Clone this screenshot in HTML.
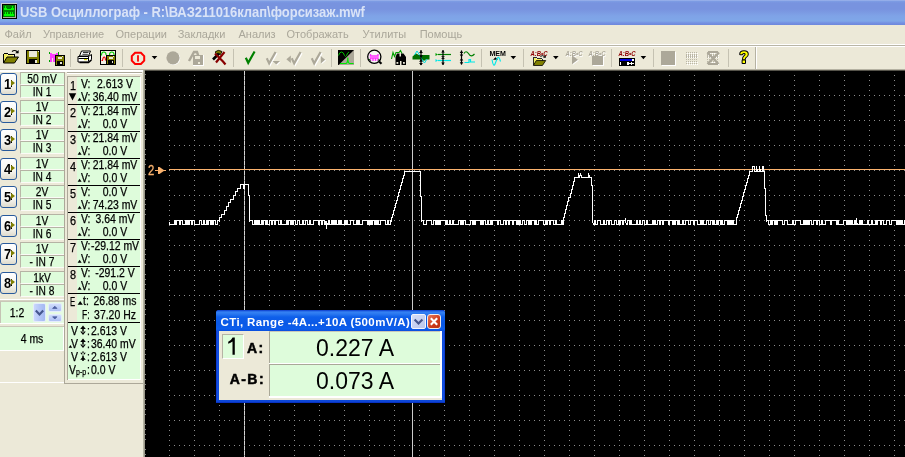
<!DOCTYPE html>
<html><head><meta charset="utf-8"><title>USB Oscilloscope</title>
<style>
html,body{margin:0;padding:0;}
html{background:#ECE9D8;}
body{will-change:transform;}
body{width:905px;height:457px;overflow:hidden;background:#ECE9D8;font-family:"Liberation Sans",sans-serif;position:relative;}
div,span{position:absolute;box-sizing:border-box;white-space:nowrap;}
svg{position:absolute;left:0;top:0;overflow:visible;}
.title{left:0;top:0;width:905px;height:25px;background:linear-gradient(#9fb6ec 0px,#7c9be3 1.5px,#7893df 3px,#7893df 9px,#7b99e2 12px,#7fa3e7 16px,#7fa7e8 21px,#7490e2 23px,#6d87dc 25px);}
.ttext{left:20px;top:4.2px;font-size:13px;font-weight:bold;color:#d9e3f7;letter-spacing:-0.04px;transform:scaleY(1.08);transform-origin:0 0;}
.menu{top:25px;left:0;width:905px;height:20px;background:#ECE9D8;}
.menu span{top:3px;font-size:11px;color:#aaa79a;}
.tb{top:45px;left:0;width:905px;height:26px;background:#ECE9D8;}
.lbl{left:20px;width:44px;height:13px;background:#defcdb;border-top:1px solid #b5b3a4;border-left:1px solid #b9b7a8;border-bottom:1px solid #fbfbf6;color:#000;}
.lbl span{left:-79.5px;width:200px;text-align:center;top:0.6px;font-size:12px;line-height:11px;transform:scaleX(0.85);transform-origin:50% 0;-webkit-text-stroke:0.25px #000;}
.btn{left:0;width:17px;height:22px;border:1px solid #285a9c;border-radius:3px;background:linear-gradient(#ffffff,#f6f5f0 60%,#dedbcd);}
.btn span{left:2.7px;top:1.6px;font-weight:bold;font-size:14px;line-height:16px;color:#000;transform:scaleX(0.92);transform-origin:0 0}
.btn i{position:absolute;left:10.3px;top:5.6px;width:0;height:0;border-left:4px solid #808000;border-top:3.5px solid transparent;border-bottom:3.5px solid transparent;}
.btn b{position:absolute;left:9.8px;top:5.6px;width:1px;height:7px;background:#000}
.m{font-size:12px;color:#000;line-height:13px;}
</style></head><body>

<div class="title"></div>
<svg width="905" height="30" viewBox="0 0 905 30" shape-rendering="crispEdges">
<rect x="1" y="3" width="16" height="16" fill="#c8ccd0"/><rect x="2" y="4" width="15" height="15" fill="#000"/><rect x="3" y="5" width="13" height="13" fill="#b0b0a0"/><rect x="3" y="5" width="12" height="12" fill="#008000"/>
<path d="M3.5 10 v-2 h1 v-2 h1.5 v2 h1 v1 h3.5 v-1 h1 v-2 h1.5 v2 h1 v2 z" fill="#00ff00"/>
<path d="M3.5 16 v-2 h1 v-2 h1 v2 h1.5 v-2 h1 v2 h1.5 v-2 h1 v2 h1.5 v-2 h1 v2 h1 v2 z" fill="#00ff00"/>
</svg>
<span class="ttext">USB Осциллограф - R:\ВАЗ211016клап\форсизаж.mwf</span>
<div class="menu">
<span style="left:4.5px">Файл</span>
<span style="left:43px">Управление</span>
<span style="left:115.5px">Операции</span>
<span style="left:177.7px">Закладки</span>
<span style="left:238.5px">Анализ</span>
<span style="left:286.5px">Отображать</span>
<span style="left:362.6px">Утилиты</span>
<span style="left:419.7px">Помощь</span>
</div>
<div class="tb"></div>
<div style="left:0;top:44px;width:905px;height:1px;background:#ffffff"></div>
<div style="left:0;top:45px;width:905px;height:1px;background:#b9b6a6"></div>
<div style="left:0;top:46px;width:905px;height:1px;background:#ffffff"></div>
<div style="left:0;top:69px;width:905px;height:1px;background:#b5b2a2"></div>
<div style="left:145px;top:70px;width:760px;height:1px;background:#55534a"></div>
<div style="left:755px;top:47px;width:1px;height:22px;background:#b5b2a2"></div>
<div style="left:756px;top:47px;width:1px;height:22px;background:#ffffff"></div>
<div style="left:70px;top:49px;width:1px;height:18px;background:#c5c2b2"></div>
<div style="left:122px;top:49px;width:1px;height:18px;background:#c5c2b2"></div>
<div style="left:233px;top:49px;width:1px;height:18px;background:#c5c2b2"></div>
<div style="left:331px;top:49px;width:1px;height:18px;background:#c5c2b2"></div>
<div style="left:360px;top:49px;width:1px;height:18px;background:#c5c2b2"></div>
<div style="left:481px;top:49px;width:1px;height:18px;background:#c5c2b2"></div>
<div style="left:523px;top:49px;width:1px;height:18px;background:#c5c2b2"></div>
<div style="left:611px;top:49px;width:1px;height:18px;background:#c5c2b2"></div>
<div style="left:653px;top:49px;width:1px;height:18px;background:#c5c2b2"></div>
<div style="left:728px;top:49px;width:1px;height:18px;background:#c5c2b2"></div>
<svg width="905" height="80" viewBox="0 0 905 80">
<g transform="translate(3,49)" shape-rendering="crispEdges"><path d="M0.5 4.5 h4 l1 1 h5.5 v3 M0.5 4.5 v9.5" fill="none" stroke="#000"/><rect x="1" y="5" width="3" height="8" fill="#f4f060"/><rect x="4" y="6" width="6" height="2" fill="#f4f060"/><path d="M0.5 14 l3.5 -6 h11.5 l-4 6 z" fill="#808000" stroke="#000" stroke-linejoin="miter" shape-rendering="auto"/><path d="M9 2.5 q2.5 -2 5 0 l0.8 1.5" fill="none" stroke="#000" stroke-width="1.1" shape-rendering="auto"/><path d="M12.2 4.2 h3.4 v-3.2 z" fill="#000" shape-rendering="auto"/></g>
<g transform="translate(26,50)" shape-rendering="crispEdges"><rect x="0" y="0" width="14" height="14" fill="#000"/><rect x="1" y="1" width="12" height="12" fill="#808000"/><rect x="2.9" y="1" width="8.0" height="6.3" fill="#ece9d8"/><rect x="2.9" y="9.0" width="8.4" height="4.0" fill="#000"/><rect x="8.7" y="10.1" width="1.8" height="2.8" fill="#ece9d8"/><rect x="11.8" y="1.2" width="1" height="1" fill="#ece9d8"/></g>
<g transform="translate(49,52)" shape-rendering="crispEdges"><path d="M1 0.5 h8 v9 h-8 z" fill="#ff40ff"/><rect x="3.2" y="0" width="3.6" height="2.4" fill="#ece9d8"/><rect x="2.6" y="6" width="1.6" height="3.5" fill="#ece9d8"/><rect x="0" y="0" width="1" height="2" fill="#00a000"/><rect x="9" y="0" width="1" height="3" fill="#00a000"/><rect x="0" y="7.5" width="1" height="2" fill="#00a000"/></g>
<g transform="translate(54.5,55)" shape-rendering="crispEdges"><rect x="0" y="0" width="10" height="10.5" fill="#000"/><rect x="1" y="1" width="8" height="8.5" fill="#808000"/><rect x="3.0" y="2.1" width="4.0" height="1.8" fill="#ece9d8"/><rect x="2.5" y="5.8" width="5.5" height="3.7" fill="#000"/><rect x="5.8" y="6.8" width="1.2" height="2.1" fill="#ece9d8"/><rect x="7.8" y="1.2" width="1" height="1" fill="#ece9d8"/></g>
<g transform="translate(77,49)"><path d="M4.5 2 h9 l-2 5 h-9 z" fill="#fff" stroke="#000" stroke-width="1"/><path d="M6 3.5 h5.5 M5.4 5.3 h5.5" stroke="#000" stroke-width="0.8"/><path d="M1 7.5 h10.5 l3 -2 v5 l-3 2.5 h-10.5 z" fill="#fff" stroke="#000" stroke-width="1"/><path d="M1.5 9.5 h10 M11.5 7.5 v5" stroke="#000" stroke-width="1"/><rect x="7" y="10" width="3" height="1.2" fill="#e0e000"/><path d="M2.5 13.5 h9 l3 -2.5" fill="none" stroke="#000" stroke-width="1.4"/></g>
<g transform="translate(100,50)" shape-rendering="crispEdges"><rect x="0" y="0" width="16" height="15" fill="#000"/><rect x="1" y="1" width="14" height="13" fill="#f4f2e6"/><path d="M1.5 5.5 q0 -3.5 2.3 -3.5 q2.3 0 2.3 3 M9.5 5 q0 -3 2.3 -3 q2.3 0 2.3 3" fill="none" stroke="#00d000" stroke-width="1.1" shape-rendering="auto"/><path d="M1.5 10.5 h1 q0.5 -3.5 1.8 -3.5 q1 0 1.2 3.5" fill="none" stroke="#f00000" stroke-width="1.1" shape-rendering="auto"/></g>
<g transform="translate(106,55)" shape-rendering="crispEdges"><rect x="0" y="0" width="9.5" height="9.5" fill="#000"/><rect x="1" y="1" width="7.5" height="7.5" fill="#808000"/><rect x="2.9" y="1.9" width="3.8" height="1.6" fill="#ece9d8"/><rect x="2.4" y="5.2" width="5.2" height="3.3" fill="#000"/><rect x="5.5" y="6.2" width="1.1" height="1.9" fill="#ece9d8"/><rect x="7.3" y="1.2" width="1" height="1" fill="#ece9d8"/></g>
<g transform="translate(130.8,51.8)"><path d="M4.3 1 h5.8 l3.3 3.3 v4.5 l-3.3 3.3 h-5.8 l-3.3 -3.3 v-4.5 z" fill="none" stroke="#ff0000" stroke-width="2"/><rect x="6.3" y="3.4" width="1.8" height="6.4" fill="#ff0000"/></g>
<g transform="translate(151.7,56)"><path d="M0 0 h5.6 l-2.8 3.2 z" fill="#000"/></g>
<g transform="translate(166,51)"><circle cx="7.6" cy="7.4" r="6.6" fill="#fff"/><circle cx="7" cy="6.8" r="6.6" fill="#aca899"/></g>
<g transform="translate(188,50)" shape-rendering="crispEdges"><path d="M1 11 l5 -9 h3 l1 3 v2" fill="none" stroke="#aca899" stroke-width="2.4" shape-rendering="auto"/><rect x="5" y="5" width="11" height="11" fill="#fff"/><rect x="4.5" y="4.5" width="10.5" height="10.5" fill="#aca899"/><rect x="7" y="5.5" width="5" height="3.5" fill="#ece9d8"/><rect x="10" y="11.5" width="1.6" height="2.5" fill="#ece9d8"/></g>
<g transform="translate(211,49)"><path d="M2 10.5 l6.5 -6.5" stroke="#000" stroke-width="2.6"/><path d="M4 3 q3 -3 7 -0.5 l-1.5 3 q-2 -2 -4 -1 z" fill="#808000" stroke="#000" stroke-width="0.8"/><path d="M4 4.5 l8 8 l2.5 3 M13.5 3 l-8.5 10.5" stroke="#880000" stroke-width="2.2" fill="none"/></g>
<g transform="translate(243,49.5)"><path d="M2.8 8.3 l2.4 5 l6.4 -11.3" fill="none" stroke="#008000" stroke-width="2.2"/></g>
<g transform="translate(264,50)"><path d="M2.8 8.3 l2.4 5 l6.4 -11.3" fill="none" stroke="#fff" stroke-width="2.2" transform="translate(1,1)"/><path d="M2.8 8.3 l2.4 5 l6.4 -11.3" fill="none" stroke="#aca899" stroke-width="2.2"/><path d="M8.5 11 h7.5 l-3.75 3.6 z" fill="#fff" transform="translate(0.8,0.8)"/><path d="M8.5 11 h7.5 l-3.75 3.6 z" fill="#aca899"/></g>
<g transform="translate(289,50)"><path d="M2.8 8.3 l2.4 5 l6.4 -11.3" fill="none" stroke="#fff" stroke-width="2.2" transform="translate(1,1)"/><path d="M2.8 8.3 l2.4 5 l6.4 -11.3" fill="none" stroke="#aca899" stroke-width="2.2"/><path d="M1.8 5.5 v7.5 l-4.4 -3.75 z" fill="#aca899"/></g>
<g transform="translate(309,50)"><path d="M2.8 8.3 l2.4 5 l6.4 -11.3" fill="none" stroke="#fff" stroke-width="2.2" transform="translate(1,1)"/><path d="M2.8 8.3 l2.4 5 l6.4 -11.3" fill="none" stroke="#aca899" stroke-width="2.2"/><path d="M11.8 6 v7.5 l4.4 -3.75 z" fill="#fff" transform="translate(0.8,0.8)"/><path d="M11.8 6 v7.5 l4.4 -3.75 z" fill="#aca899"/></g>
<g transform="translate(338,50)" shape-rendering="crispEdges"><rect x="0" y="0" width="16" height="15" fill="#000"/><path d="M16 0 v15 h-15.5 z" fill="#aca899" shape-rendering="auto"/><path d="M0.5 5.5 q1 -3.5 3 -3.5 q2 0 3 3.5 q1 2 2 0 q1 -3 2.5 -3.5" fill="none" stroke="#00c000" stroke-width="1" shape-rendering="auto"/><path d="M2 13.5 h6 q1.8 -0.5 1.8 -6 q0 5.5 1.8 6 h4" fill="none" stroke="#00e800" stroke-width="1.2" shape-rendering="auto"/></g>
<g transform="translate(367,49.5)"><circle cx="7.3" cy="7.3" r="6.6" fill="#f8f8f4" stroke="#000" stroke-width="1.3"/><path d="M12.3 12.3 l2.2 2" stroke="#000" stroke-width="2.2"/><path d="M3.5 4.5 v2 h7.5 v-2 M3.5 11.5 v-3 h7.5 v3 M6 9 v2.5 M8.5 9 v2.5" fill="none" stroke="#ff30ff" stroke-width="1.4"/><path d="M2.2 9.5 l1.2 1.8 M12.2 9.5 l-1 1.8" stroke="#008000" stroke-width="1"/></g>
<g transform="translate(390.5,50)"><path d="M1 9 l1.5 -6.5 l1.5 4 l1.5 -4 h3 l1.5 -2 l1.5 3" fill="none" stroke="#00a000" stroke-width="1.1"/><path d="M5 7 l1.5 -3.5 h2.5 v3 h1.5 v-3 h2.5 l2.5 3.5 v8 h-4.5 v-4 h-1.5 v4 h-4.5 z" fill="#000"/><rect x="6" y="12" width="1.8" height="1.8" fill="#ece9d8"/><rect x="12.5" y="12" width="1.8" height="1.8" fill="#ece9d8"/></g>
<g transform="translate(412.5,50)"><path d="M0 9.5 v-3 l3.5 -3 l3 1.5 h10.5 v4.5 h-4 v1 h-3 l-1 -1 z" fill="#007000"/><path d="M2 5 l2.5 -4 l2.5 4 l3.5 6 l1.5 2 l2.5 -4" fill="none" stroke="#00e0e0" stroke-width="1"/><path d="M8.5 0 v15" stroke="#000" stroke-width="1.2"/><path d="M6.6 3 h3.8 l-1.9 -2.6 z M6.6 5.2 h3.8 l-1.9 2.6 z M6.6 11.8 h3.8 l-1.9 -2.6 z M6.6 13 h3.8 l-1.9 2.6 z" fill="#000"/></g>
<g transform="translate(435,50)"><path d="M3 4.5 h13" stroke="#008000" stroke-width="1.2"/><path d="M3 10.5 h13" stroke="#00e8e8" stroke-width="1.2"/><path d="M0.5 3 l2.5 1.5 l-2.5 1.5 z" fill="#00a000"/><path d="M0.5 9 l2.5 1.5 l-2.5 1.5 z" fill="#00e8e8"/><path d="M8 0 v15" stroke="#000" stroke-width="1.2"/><path d="M6.2 2.6 h3.6 l-1.8 -2.4 z M6.2 6.2 h3.6 l-1.8 2.2 z M6.2 9 h3.6 l-1.8 -2.2 z M6.2 12.6 h3.6 l-1.8 2.4 z" fill="#000"/></g>
<g transform="translate(459.5,50)"><path d="M2 0.5 v14" stroke="#000" stroke-width="1.2"/><path d="M0.2 3 h3.6 l-1.8 -2.6 z M0.2 4.6 h3.6 l-1.8 2.4 z M0.2 10.6 h3.6 l-1.8 -2.6 z M0.2 12.2 h3.6 l-1.8 2.6 z" fill="#000"/><path d="M4.5 3.5 q2 -3.5 4.5 0 q2.5 4.5 6 0.5" fill="none" stroke="#008000" stroke-width="1.2"/><path d="M5 12.5 h4.5 v-3 h1.5 v2.5 h4.5" fill="none" stroke="#00e8e8" stroke-width="1.2"/></g>
<text x="489.4" y="56.2" font-family="Liberation Sans" font-size="7" font-weight="bold" fill="#000" textLength="16.5" lengthAdjust="spacingAndGlyphs">MEM</text>
<g transform="translate(489.5,50)"><path d="M3.5 9.8 h5 l-2.5 -2.6 z" fill="#000"/><path d="M2.5 9.5 q1.5 9 3.2 4 l2 -5 q1.5 -3.5 3.3 3" fill="none" stroke="#00e8e8" stroke-width="1.1"/></g>
<g transform="translate(510.5,56)"><path d="M0 0 h5.6 l-2.8 3.2 z" fill="#000"/></g>
<text x="530.5" y="56.3" font-family="Liberation Sans" font-size="7.2" font-weight="bold" font-style="italic" fill="#900000" textLength="17" lengthAdjust="spacingAndGlyphs">A:B•C</text>
<g transform="translate(533,54)" shape-rendering="crispEdges"><g transform="scale(0.82)"><path d="M0.5 4.5 h4 l1 1 h5.5 v3 M0.5 4.5 v9.5" fill="none" stroke="#000"/><rect x="1" y="5" width="3" height="8" fill="#f4f060"/><rect x="4" y="6" width="6" height="2" fill="#f4f060"/><path d="M0.5 14 l3.5 -6 h11.5 l-4 6 z" fill="#808000" stroke="#000" stroke-linejoin="miter" shape-rendering="auto"/><path d="M9 3 q2.5 -2 5 0" fill="none" stroke="#000" stroke-width="1.2" shape-rendering="auto"/><path d="M12.2 4.6 h3.4 v-3.2 z" fill="#000" shape-rendering="auto"/></g></g>
<g transform="translate(553,56)"><path d="M0 0 h5.6 l-2.8 3.2 z" fill="#000"/></g>
<text x="566.3" y="57.1" font-family="Liberation Sans" font-size="7.2" font-weight="bold" font-style="italic" fill="#fff" textLength="17" lengthAdjust="spacingAndGlyphs">A:B•C</text>
<text x="565.5" y="56.3" font-family="Liberation Sans" font-size="7.2" font-weight="bold" font-style="italic" fill="#aca899" textLength="17" lengthAdjust="spacingAndGlyphs">A:B•C</text>
<g transform="translate(572,55.3)"><path d="M0.8 0.8 v9 l6 -4.5 z" fill="#fff"/><path d="M0 0 v9 l6 -4.5 z" fill="#aca899"/></g>
<text x="589.3" y="57.1" font-family="Liberation Sans" font-size="7.2" font-weight="bold" font-style="italic" fill="#fff" textLength="17" lengthAdjust="spacingAndGlyphs">A:B•C</text>
<text x="588.5" y="56.3" font-family="Liberation Sans" font-size="7.2" font-weight="bold" font-style="italic" fill="#aca899" textLength="17" lengthAdjust="spacingAndGlyphs">A:B•C</text>
<g transform="translate(592,55.5)" shape-rendering="crispEdges"><rect x="1" y="1" width="10.5" height="9" fill="#fff"/><rect x="0" y="0" width="10.5" height="9" fill="#aca899"/></g>
<text x="618.5" y="56.3" font-family="Liberation Sans" font-size="7.2" font-weight="bold" font-style="italic" fill="#900000" textLength="17" lengthAdjust="spacingAndGlyphs">A:B•C</text>
<g transform="translate(619,58)" shape-rendering="crispEdges"><rect x="0" y="0" width="16" height="8" fill="#000"/><rect x="1" y="1" width="12" height="2" fill="#0000e0"/><rect x="13" y="1" width="2" height="2" fill="#fff"/><rect x="1" y="3.5" width="14" height="3.5" fill="#fff"/><rect x="2" y="4" width="6" height="2.5" fill="#000"/><rect x="9.5" y="4" width="2" height="1" fill="#000"/><rect x="12.5" y="4" width="2" height="1" fill="#000"/><rect x="9.5" y="5.7" width="2" height="1" fill="#000"/><rect x="12.5" y="5.7" width="2" height="1" fill="#000"/></g>
<g transform="translate(640.6,56)"><path d="M0 0 h5.6 l-2.8 3.2 z" fill="#000"/></g>
<g transform="translate(661,51)" shape-rendering="crispEdges"><rect x="1" y="1" width="14" height="13.5" fill="#fff"/><rect x="0" y="0" width="14" height="13.5" fill="#aca899"/></g>
<g transform="translate(686,52)" shape-rendering="crispEdges"><rect x="0" y="0.0" width="1.3" height="1.3" fill="#b9b6a6"/><rect x="0.9" y="0.9" width="0.8" height="0.8" fill="#fff"/><rect x="2" y="0.0" width="1.3" height="1.3" fill="#b9b6a6"/><rect x="2.9" y="0.9" width="0.8" height="0.8" fill="#fff"/><rect x="4" y="0.0" width="1.3" height="1.3" fill="#b9b6a6"/><rect x="4.9" y="0.9" width="0.8" height="0.8" fill="#fff"/><rect x="6" y="0.0" width="1.3" height="1.3" fill="#b9b6a6"/><rect x="6.9" y="0.9" width="0.8" height="0.8" fill="#fff"/><rect x="8" y="0.0" width="1.3" height="1.3" fill="#b9b6a6"/><rect x="8.9" y="0.9" width="0.8" height="0.8" fill="#fff"/><rect x="10" y="0.0" width="1.3" height="1.3" fill="#b9b6a6"/><rect x="10.9" y="0.9" width="0.8" height="0.8" fill="#fff"/><rect x="0" y="2.2" width="1.3" height="1.3" fill="#b9b6a6"/><rect x="0.9" y="3.1" width="0.8" height="0.8" fill="#fff"/><rect x="2" y="2.2" width="1.3" height="1.3" fill="#b9b6a6"/><rect x="2.9" y="3.1" width="0.8" height="0.8" fill="#fff"/><rect x="4" y="2.2" width="1.3" height="1.3" fill="#b9b6a6"/><rect x="4.9" y="3.1" width="0.8" height="0.8" fill="#fff"/><rect x="6" y="2.2" width="1.3" height="1.3" fill="#b9b6a6"/><rect x="6.9" y="3.1" width="0.8" height="0.8" fill="#fff"/><rect x="8" y="2.2" width="1.3" height="1.3" fill="#b9b6a6"/><rect x="8.9" y="3.1" width="0.8" height="0.8" fill="#fff"/><rect x="10" y="2.2" width="1.3" height="1.3" fill="#b9b6a6"/><rect x="10.9" y="3.1" width="0.8" height="0.8" fill="#fff"/><rect x="0" y="4.4" width="1.3" height="1.3" fill="#b9b6a6"/><rect x="0.9" y="5.3" width="0.8" height="0.8" fill="#fff"/><rect x="2" y="4.4" width="1.3" height="1.3" fill="#b9b6a6"/><rect x="2.9" y="5.3" width="0.8" height="0.8" fill="#fff"/><rect x="4" y="4.4" width="1.3" height="1.3" fill="#b9b6a6"/><rect x="4.9" y="5.3" width="0.8" height="0.8" fill="#fff"/><rect x="6" y="4.4" width="1.3" height="1.3" fill="#b9b6a6"/><rect x="6.9" y="5.3" width="0.8" height="0.8" fill="#fff"/><rect x="8" y="4.4" width="1.3" height="1.3" fill="#b9b6a6"/><rect x="8.9" y="5.3" width="0.8" height="0.8" fill="#fff"/><rect x="10" y="4.4" width="1.3" height="1.3" fill="#b9b6a6"/><rect x="10.9" y="5.3" width="0.8" height="0.8" fill="#fff"/><rect x="0" y="6.6" width="1.3" height="1.3" fill="#b9b6a6"/><rect x="0.9" y="7.5" width="0.8" height="0.8" fill="#fff"/><rect x="2" y="6.6" width="1.3" height="1.3" fill="#b9b6a6"/><rect x="2.9" y="7.5" width="0.8" height="0.8" fill="#fff"/><rect x="4" y="6.6" width="1.3" height="1.3" fill="#b9b6a6"/><rect x="4.9" y="7.5" width="0.8" height="0.8" fill="#fff"/><rect x="6" y="6.6" width="1.3" height="1.3" fill="#b9b6a6"/><rect x="6.9" y="7.5" width="0.8" height="0.8" fill="#fff"/><rect x="8" y="6.6" width="1.3" height="1.3" fill="#b9b6a6"/><rect x="8.9" y="7.5" width="0.8" height="0.8" fill="#fff"/><rect x="10" y="6.6" width="1.3" height="1.3" fill="#b9b6a6"/><rect x="10.9" y="7.5" width="0.8" height="0.8" fill="#fff"/><rect x="0" y="8.8" width="1.3" height="1.3" fill="#b9b6a6"/><rect x="0.9" y="9.7" width="0.8" height="0.8" fill="#fff"/><rect x="2" y="8.8" width="1.3" height="1.3" fill="#b9b6a6"/><rect x="2.9" y="9.7" width="0.8" height="0.8" fill="#fff"/><rect x="4" y="8.8" width="1.3" height="1.3" fill="#b9b6a6"/><rect x="4.9" y="9.7" width="0.8" height="0.8" fill="#fff"/><rect x="6" y="8.8" width="1.3" height="1.3" fill="#b9b6a6"/><rect x="6.9" y="9.7" width="0.8" height="0.8" fill="#fff"/><rect x="8" y="8.8" width="1.3" height="1.3" fill="#b9b6a6"/><rect x="8.9" y="9.7" width="0.8" height="0.8" fill="#fff"/><rect x="10" y="8.8" width="1.3" height="1.3" fill="#b9b6a6"/><rect x="10.9" y="9.7" width="0.8" height="0.8" fill="#fff"/><rect x="0" y="11.0" width="1.3" height="1.3" fill="#b9b6a6"/><rect x="0.9" y="11.9" width="0.8" height="0.8" fill="#fff"/><rect x="2" y="11.0" width="1.3" height="1.3" fill="#b9b6a6"/><rect x="2.9" y="11.9" width="0.8" height="0.8" fill="#fff"/><rect x="4" y="11.0" width="1.3" height="1.3" fill="#b9b6a6"/><rect x="4.9" y="11.9" width="0.8" height="0.8" fill="#fff"/><rect x="6" y="11.0" width="1.3" height="1.3" fill="#b9b6a6"/><rect x="6.9" y="11.9" width="0.8" height="0.8" fill="#fff"/><rect x="8" y="11.0" width="1.3" height="1.3" fill="#b9b6a6"/><rect x="8.9" y="11.9" width="0.8" height="0.8" fill="#fff"/><rect x="10" y="11.0" width="1.3" height="1.3" fill="#b9b6a6"/><rect x="10.9" y="11.9" width="0.8" height="0.8" fill="#fff"/></g>
<g transform="translate(707,52)" shape-rendering="crispEdges"><rect x="0" y="0.0" width="1.3" height="1.3" fill="#b9b6a6"/><rect x="0.9" y="0.9" width="0.8" height="0.8" fill="#fff"/><rect x="2" y="0.0" width="1.3" height="1.3" fill="#b9b6a6"/><rect x="2.9" y="0.9" width="0.8" height="0.8" fill="#fff"/><rect x="4" y="0.0" width="1.3" height="1.3" fill="#b9b6a6"/><rect x="4.9" y="0.9" width="0.8" height="0.8" fill="#fff"/><rect x="6" y="0.0" width="1.3" height="1.3" fill="#b9b6a6"/><rect x="6.9" y="0.9" width="0.8" height="0.8" fill="#fff"/><rect x="8" y="0.0" width="1.3" height="1.3" fill="#b9b6a6"/><rect x="8.9" y="0.9" width="0.8" height="0.8" fill="#fff"/><rect x="10" y="0.0" width="1.3" height="1.3" fill="#b9b6a6"/><rect x="10.9" y="0.9" width="0.8" height="0.8" fill="#fff"/><rect x="0" y="2.2" width="1.3" height="1.3" fill="#b9b6a6"/><rect x="0.9" y="3.1" width="0.8" height="0.8" fill="#fff"/><rect x="2" y="2.2" width="1.3" height="1.3" fill="#b9b6a6"/><rect x="2.9" y="3.1" width="0.8" height="0.8" fill="#fff"/><rect x="4" y="2.2" width="1.3" height="1.3" fill="#b9b6a6"/><rect x="4.9" y="3.1" width="0.8" height="0.8" fill="#fff"/><rect x="6" y="2.2" width="1.3" height="1.3" fill="#b9b6a6"/><rect x="6.9" y="3.1" width="0.8" height="0.8" fill="#fff"/><rect x="8" y="2.2" width="1.3" height="1.3" fill="#b9b6a6"/><rect x="8.9" y="3.1" width="0.8" height="0.8" fill="#fff"/><rect x="10" y="2.2" width="1.3" height="1.3" fill="#b9b6a6"/><rect x="10.9" y="3.1" width="0.8" height="0.8" fill="#fff"/><rect x="0" y="4.4" width="1.3" height="1.3" fill="#b9b6a6"/><rect x="0.9" y="5.3" width="0.8" height="0.8" fill="#fff"/><rect x="2" y="4.4" width="1.3" height="1.3" fill="#b9b6a6"/><rect x="2.9" y="5.3" width="0.8" height="0.8" fill="#fff"/><rect x="4" y="4.4" width="1.3" height="1.3" fill="#b9b6a6"/><rect x="4.9" y="5.3" width="0.8" height="0.8" fill="#fff"/><rect x="6" y="4.4" width="1.3" height="1.3" fill="#b9b6a6"/><rect x="6.9" y="5.3" width="0.8" height="0.8" fill="#fff"/><rect x="8" y="4.4" width="1.3" height="1.3" fill="#b9b6a6"/><rect x="8.9" y="5.3" width="0.8" height="0.8" fill="#fff"/><rect x="10" y="4.4" width="1.3" height="1.3" fill="#b9b6a6"/><rect x="10.9" y="5.3" width="0.8" height="0.8" fill="#fff"/><rect x="0" y="6.6" width="1.3" height="1.3" fill="#b9b6a6"/><rect x="0.9" y="7.5" width="0.8" height="0.8" fill="#fff"/><rect x="2" y="6.6" width="1.3" height="1.3" fill="#b9b6a6"/><rect x="2.9" y="7.5" width="0.8" height="0.8" fill="#fff"/><rect x="4" y="6.6" width="1.3" height="1.3" fill="#b9b6a6"/><rect x="4.9" y="7.5" width="0.8" height="0.8" fill="#fff"/><rect x="6" y="6.6" width="1.3" height="1.3" fill="#b9b6a6"/><rect x="6.9" y="7.5" width="0.8" height="0.8" fill="#fff"/><rect x="8" y="6.6" width="1.3" height="1.3" fill="#b9b6a6"/><rect x="8.9" y="7.5" width="0.8" height="0.8" fill="#fff"/><rect x="10" y="6.6" width="1.3" height="1.3" fill="#b9b6a6"/><rect x="10.9" y="7.5" width="0.8" height="0.8" fill="#fff"/><rect x="0" y="8.8" width="1.3" height="1.3" fill="#b9b6a6"/><rect x="0.9" y="9.7" width="0.8" height="0.8" fill="#fff"/><rect x="2" y="8.8" width="1.3" height="1.3" fill="#b9b6a6"/><rect x="2.9" y="9.7" width="0.8" height="0.8" fill="#fff"/><rect x="4" y="8.8" width="1.3" height="1.3" fill="#b9b6a6"/><rect x="4.9" y="9.7" width="0.8" height="0.8" fill="#fff"/><rect x="6" y="8.8" width="1.3" height="1.3" fill="#b9b6a6"/><rect x="6.9" y="9.7" width="0.8" height="0.8" fill="#fff"/><rect x="8" y="8.8" width="1.3" height="1.3" fill="#b9b6a6"/><rect x="8.9" y="9.7" width="0.8" height="0.8" fill="#fff"/><rect x="10" y="8.8" width="1.3" height="1.3" fill="#b9b6a6"/><rect x="10.9" y="9.7" width="0.8" height="0.8" fill="#fff"/><rect x="0" y="11.0" width="1.3" height="1.3" fill="#b9b6a6"/><rect x="0.9" y="11.9" width="0.8" height="0.8" fill="#fff"/><rect x="2" y="11.0" width="1.3" height="1.3" fill="#b9b6a6"/><rect x="2.9" y="11.9" width="0.8" height="0.8" fill="#fff"/><rect x="4" y="11.0" width="1.3" height="1.3" fill="#b9b6a6"/><rect x="4.9" y="11.9" width="0.8" height="0.8" fill="#fff"/><rect x="6" y="11.0" width="1.3" height="1.3" fill="#b9b6a6"/><rect x="6.9" y="11.9" width="0.8" height="0.8" fill="#fff"/><rect x="8" y="11.0" width="1.3" height="1.3" fill="#b9b6a6"/><rect x="8.9" y="11.9" width="0.8" height="0.8" fill="#fff"/><rect x="10" y="11.0" width="1.3" height="1.3" fill="#b9b6a6"/><rect x="10.9" y="11.9" width="0.8" height="0.8" fill="#fff"/><path d="M0.5 0.5 l11 11.5 M12 0.5 l-11.5 11.5" stroke="#aca899" stroke-width="2.4" shape-rendering="auto"/><path d="M1 0 h10 M1 12 h10" stroke="#aca899" stroke-width="1.6"/></g>
<g transform="translate(739,50)"><path d="M1.2 4.2 q0 -3 3.8 -3 q3.8 0 3.8 3 q0 1.8 -2 3 q-1 0.6 -1 2 h-1.8 q0 -2 1.2 -3 q1.4 -1 1.4 -2 q0 -1.2 -1.6 -1.2 q-1.6 0 -1.8 1.2 z M3.6 10.6 h2.4 v2.4 h-2.4 z" fill="#ffff00" stroke="#000" stroke-width="2" paint-order="stroke" stroke-linejoin="round"/></g>
</svg>
<div style="left:0;top:71px;width:145px;height:386px;background:#ECE9D8"></div>
<div class="btn" style="top:73.0px"><span>1</span><b></b><i></i></div>
<div class="lbl" style="top:72.0px"><span>50 mV</span></div>
<div class="lbl" style="top:85.0px"><span>IN 1</span></div>
<div class="btn" style="top:101.0px"><span>2</span><b></b><i></i></div>
<div class="lbl" style="top:100.0px"><span>1V</span></div>
<div class="lbl" style="top:113.0px"><span>IN 2</span></div>
<div class="btn" style="top:129.0px"><span>3</span><b></b><i></i></div>
<div class="lbl" style="top:128.0px"><span>1V</span></div>
<div class="lbl" style="top:141.0px"><span>IN 3</span></div>
<div class="btn" style="top:158.0px"><span>4</span><b></b><i></i></div>
<div class="lbl" style="top:157.0px"><span>1V</span></div>
<div class="lbl" style="top:170.0px"><span>IN 4</span></div>
<div class="btn" style="top:186.0px"><span>5</span><b></b><i></i></div>
<div class="lbl" style="top:185.0px"><span>2V</span></div>
<div class="lbl" style="top:198.0px"><span>IN 5</span></div>
<div class="btn" style="top:215.0px"><span>6</span><b></b><i></i></div>
<div class="lbl" style="top:214.0px"><span>1V</span></div>
<div class="lbl" style="top:227.0px"><span>IN 6</span></div>
<div class="btn" style="top:243.0px"><span>7</span><b></b><i></i></div>
<div class="lbl" style="top:242.0px"><span>1V</span></div>
<div class="lbl" style="top:255.0px"><span>- IN 7</span></div>
<div class="btn" style="top:272.0px"><span>8</span><b></b><i></i></div>
<div class="lbl" style="top:271.0px"><span>1kV</span></div>
<div class="lbl" style="top:284.0px"><span>- IN 8</span></div>
<div style="left:0px;top:70px;width:143px;height:2px;background:#fff"></div>
<div style="left:64px;top:72px;width:1px;height:311px;background:#aca899"></div>
<div style="left:67px;top:72px;width:75px;height:1px;background:#aca899"></div>
<div style="left:67px;top:73px;width:75px;height:1px;background:#fff"></div>
<div style="left:67px;top:76px;width:73px;height:1px;background:#aca899"></div>
<div style="left:67px;top:76px;width:1px;height:304px;background:#aca899"></div>
<div style="left:68px;top:77px;width:73px;height:303px;background:#fff"></div>
<div style="left:68px;top:77px;width:72px;height:302px;background:#defcdb"></div>
<div style="left:68px;top:77px;width:9px;height:245px;background:#ECE9D8"></div>
<div style="left:64px;top:383px;width:79px;height:1px;background:#aca899"></div>
<div style="left:0px;top:382px;width:64px;height:1px;background:#fff"></div>
<div style="left:143px;top:70px;width:1px;height:387px;background:#b5b3a3"></div>
<div style="left:144px;top:70px;width:1px;height:387px;background:#9a9889"></div>
<div style="left:68px;top:104px;width:72px;height:1px;background:#000"></div>
<div style="left:68px;top:131px;width:72px;height:1px;background:#000"></div>
<div style="left:68px;top:158px;width:72px;height:1px;background:#000"></div>
<div style="left:68px;top:185px;width:72px;height:1px;background:#000"></div>
<div style="left:68px;top:212px;width:72px;height:1px;background:#000"></div>
<div style="left:68px;top:239px;width:72px;height:1px;background:#000"></div>
<div style="left:68px;top:266px;width:72px;height:1px;background:#000"></div>
<div style="left:68px;top:293px;width:72px;height:1px;background:#000"></div>
<div style="left:68px;top:322px;width:72px;height:1px;background:#000"></div>
<span style="left:69.5px;transform-origin:0 0;top:80.12px;font-size:12.5px;line-height:12.5px;-webkit-text-stroke:0.25px #000;transform:scaleX(0.87);">1</span>
<span style="left:81px;transform-origin:0 0;top:78.44px;font-size:12px;line-height:12px;-webkit-text-stroke:0.25px #000;transform:scaleX(0.87);">V:</span>
<span style="left:15px;width:200px;text-align:center;transform-origin:50% 0;top:78.44px;font-size:12px;line-height:12px;-webkit-text-stroke:0.25px #000;transform:scaleX(0.87);">2.613 V</span>
<span style="left:81px;transform-origin:0 0;top:91.34px;font-size:12px;line-height:12px;-webkit-text-stroke:0.25px #000;transform:scaleX(0.87);">V:</span>
<span style="left:15px;width:200px;text-align:center;transform-origin:50% 0;top:91.34px;font-size:12px;line-height:12px;-webkit-text-stroke:0.25px #000;transform:scaleX(0.87);">36.40 mV</span>
<span style="left:69.5px;transform-origin:0 0;top:107.12px;font-size:12.5px;line-height:12.5px;-webkit-text-stroke:0.25px #000;transform:scaleX(0.87);">2</span>
<span style="left:81px;transform-origin:0 0;top:105.44px;font-size:12px;line-height:12px;-webkit-text-stroke:0.25px #000;transform:scaleX(0.87);">V:</span>
<span style="left:15px;width:200px;text-align:center;transform-origin:50% 0;top:105.44px;font-size:12px;line-height:12px;-webkit-text-stroke:0.25px #000;transform:scaleX(0.87);">21.84 mV</span>
<span style="left:81px;transform-origin:0 0;top:118.34px;font-size:12px;line-height:12px;-webkit-text-stroke:0.25px #000;transform:scaleX(0.87);">V:</span>
<span style="left:15px;width:200px;text-align:center;transform-origin:50% 0;top:118.34px;font-size:12px;line-height:12px;-webkit-text-stroke:0.25px #000;transform:scaleX(0.87);">0.0 V</span>
<span style="left:69.5px;transform-origin:0 0;top:134.12px;font-size:12.5px;line-height:12.5px;-webkit-text-stroke:0.25px #000;transform:scaleX(0.87);">3</span>
<span style="left:81px;transform-origin:0 0;top:132.44px;font-size:12px;line-height:12px;-webkit-text-stroke:0.25px #000;transform:scaleX(0.87);">V:</span>
<span style="left:15px;width:200px;text-align:center;transform-origin:50% 0;top:132.44px;font-size:12px;line-height:12px;-webkit-text-stroke:0.25px #000;transform:scaleX(0.87);">21.84 mV</span>
<span style="left:81px;transform-origin:0 0;top:145.34px;font-size:12px;line-height:12px;-webkit-text-stroke:0.25px #000;transform:scaleX(0.87);">V:</span>
<span style="left:15px;width:200px;text-align:center;transform-origin:50% 0;top:145.34px;font-size:12px;line-height:12px;-webkit-text-stroke:0.25px #000;transform:scaleX(0.87);">0.0 V</span>
<span style="left:69.5px;transform-origin:0 0;top:161.12px;font-size:12.5px;line-height:12.5px;-webkit-text-stroke:0.25px #000;transform:scaleX(0.87);">4</span>
<span style="left:81px;transform-origin:0 0;top:159.44px;font-size:12px;line-height:12px;-webkit-text-stroke:0.25px #000;transform:scaleX(0.87);">V:</span>
<span style="left:15px;width:200px;text-align:center;transform-origin:50% 0;top:159.44px;font-size:12px;line-height:12px;-webkit-text-stroke:0.25px #000;transform:scaleX(0.87);">21.84 mV</span>
<span style="left:81px;transform-origin:0 0;top:172.34px;font-size:12px;line-height:12px;-webkit-text-stroke:0.25px #000;transform:scaleX(0.87);">V:</span>
<span style="left:15px;width:200px;text-align:center;transform-origin:50% 0;top:172.34px;font-size:12px;line-height:12px;-webkit-text-stroke:0.25px #000;transform:scaleX(0.87);">0.0 V</span>
<span style="left:69.5px;transform-origin:0 0;top:188.12px;font-size:12.5px;line-height:12.5px;-webkit-text-stroke:0.25px #000;transform:scaleX(0.87);">5</span>
<span style="left:81px;transform-origin:0 0;top:186.44px;font-size:12px;line-height:12px;-webkit-text-stroke:0.25px #000;transform:scaleX(0.87);">V:</span>
<span style="left:15px;width:200px;text-align:center;transform-origin:50% 0;top:186.44px;font-size:12px;line-height:12px;-webkit-text-stroke:0.25px #000;transform:scaleX(0.87);">0.0 V</span>
<span style="left:81px;transform-origin:0 0;top:199.34px;font-size:12px;line-height:12px;-webkit-text-stroke:0.25px #000;transform:scaleX(0.87);">V:</span>
<span style="left:15px;width:200px;text-align:center;transform-origin:50% 0;top:199.34px;font-size:12px;line-height:12px;-webkit-text-stroke:0.25px #000;transform:scaleX(0.87);">74.23 mV</span>
<span style="left:69.5px;transform-origin:0 0;top:215.12px;font-size:12.5px;line-height:12.5px;-webkit-text-stroke:0.25px #000;transform:scaleX(0.87);">6</span>
<span style="left:81px;transform-origin:0 0;top:213.44px;font-size:12px;line-height:12px;-webkit-text-stroke:0.25px #000;transform:scaleX(0.87);">V:</span>
<span style="left:15px;width:200px;text-align:center;transform-origin:50% 0;top:213.44px;font-size:12px;line-height:12px;-webkit-text-stroke:0.25px #000;transform:scaleX(0.87);">3.64 mV</span>
<span style="left:81px;transform-origin:0 0;top:226.34px;font-size:12px;line-height:12px;-webkit-text-stroke:0.25px #000;transform:scaleX(0.87);">V:</span>
<span style="left:15px;width:200px;text-align:center;transform-origin:50% 0;top:226.34px;font-size:12px;line-height:12px;-webkit-text-stroke:0.25px #000;transform:scaleX(0.87);">0.0 V</span>
<span style="left:69.5px;transform-origin:0 0;top:242.12px;font-size:12.5px;line-height:12.5px;-webkit-text-stroke:0.25px #000;transform:scaleX(0.87);">7</span>
<span style="left:81px;transform-origin:0 0;top:240.44px;font-size:12px;line-height:12px;-webkit-text-stroke:0.25px #000;transform:scaleX(0.87);">V:</span>
<span style="left:15px;width:200px;text-align:center;transform-origin:50% 0;top:240.44px;font-size:12px;line-height:12px;-webkit-text-stroke:0.25px #000;transform:scaleX(0.87);">-29.12 mV</span>
<span style="left:81px;transform-origin:0 0;top:253.34px;font-size:12px;line-height:12px;-webkit-text-stroke:0.25px #000;transform:scaleX(0.87);">V:</span>
<span style="left:15px;width:200px;text-align:center;transform-origin:50% 0;top:253.34px;font-size:12px;line-height:12px;-webkit-text-stroke:0.25px #000;transform:scaleX(0.87);">0.0 V</span>
<span style="left:69.5px;transform-origin:0 0;top:269.12px;font-size:12.5px;line-height:12.5px;-webkit-text-stroke:0.25px #000;transform:scaleX(0.87);">8</span>
<span style="left:81px;transform-origin:0 0;top:267.44px;font-size:12px;line-height:12px;-webkit-text-stroke:0.25px #000;transform:scaleX(0.87);">V:</span>
<span style="left:15px;width:200px;text-align:center;transform-origin:50% 0;top:267.44px;font-size:12px;line-height:12px;-webkit-text-stroke:0.25px #000;transform:scaleX(0.87);">-291.2 V</span>
<span style="left:81px;transform-origin:0 0;top:280.34px;font-size:12px;line-height:12px;-webkit-text-stroke:0.25px #000;transform:scaleX(0.87);">V:</span>
<span style="left:15px;width:200px;text-align:center;transform-origin:50% 0;top:280.34px;font-size:12px;line-height:12px;-webkit-text-stroke:0.25px #000;transform:scaleX(0.87);">0.0 V</span>
<span style="left:69.6px;transform-origin:0 0;top:295.92px;font-size:12.5px;line-height:12.5px;-webkit-text-stroke:0.25px #000;transform:scaleX(0.62);">E</span>
<span style="left:83.2px;transform-origin:0 0;top:295.44px;font-size:12px;line-height:12px;-webkit-text-stroke:0.25px #000;transform:scaleX(0.87);">t:</span>
<span style="left:15px;width:200px;text-align:center;transform-origin:50% 0;top:295.44px;font-size:12px;line-height:12px;-webkit-text-stroke:0.25px #000;transform:scaleX(0.87);">26.88 ms</span>
<span style="left:82px;transform-origin:0 0;top:309.14px;font-size:12px;line-height:12px;-webkit-text-stroke:0.25px #000;transform:scaleX(0.72);">F:</span>
<span style="left:15px;width:200px;text-align:center;transform-origin:50% 0;top:309.14px;font-size:12px;line-height:12px;-webkit-text-stroke:0.25px #000;transform:scaleX(0.87);">37.20 Hz</span>
<span style="left:91px;transform-origin:0 0;top:325.44px;font-size:12px;line-height:12px;-webkit-text-stroke:0.25px #000;transform:scaleX(0.87);">2.613 V</span>
<span style="left:71.2px;transform-origin:0 0;top:325.44px;font-size:12px;line-height:12px;-webkit-text-stroke:0.25px #000;transform:scaleX(0.87);">V</span>
<span style="left:87px;transform-origin:0 0;top:325.44px;font-size:12px;line-height:12px;-webkit-text-stroke:0.25px #000;transform:scaleX(0.87);">:</span>
<span style="left:91px;transform-origin:0 0;top:338.44px;font-size:12px;line-height:12px;-webkit-text-stroke:0.25px #000;transform:scaleX(0.87);">36.40 mV</span>
<span style="left:71.2px;transform-origin:0 0;top:338.44px;font-size:12px;line-height:12px;-webkit-text-stroke:0.25px #000;transform:scaleX(0.87);">V</span>
<span style="left:87px;transform-origin:0 0;top:338.44px;font-size:12px;line-height:12px;-webkit-text-stroke:0.25px #000;transform:scaleX(0.87);">:</span>
<span style="left:91px;transform-origin:0 0;top:351.44px;font-size:12px;line-height:12px;-webkit-text-stroke:0.25px #000;transform:scaleX(0.87);">2.613 V</span>
<span style="left:71.2px;transform-origin:0 0;top:351.44px;font-size:12px;line-height:12px;-webkit-text-stroke:0.25px #000;transform:scaleX(0.87);">V</span>
<span style="left:87px;transform-origin:0 0;top:351.44px;font-size:12px;line-height:12px;-webkit-text-stroke:0.25px #000;transform:scaleX(0.87);">:</span>
<span style="left:91px;transform-origin:0 0;top:364.44px;font-size:12px;line-height:12px;-webkit-text-stroke:0.25px #000;transform:scaleX(0.87);">0.0 V</span>
<span style="left:69.3px;transform-origin:0 0;top:364.44px;font-size:12px;line-height:12px;-webkit-text-stroke:0.25px #000;transform:scaleX(0.87);">V</span>
<span style="left:76.2px;transform-origin:0 0;top:368.00px;font-size:8.5px;line-height:8.5px;-webkit-text-stroke:0.25px #000;transform:scaleX(0.82);">p-p</span>
<span style="left:87px;transform-origin:0 0;top:364.44px;font-size:12px;line-height:12px;-webkit-text-stroke:0.25px #000;transform:scaleX(0.87);">:</span>
<svg width="905" height="457" viewBox="0 0 905 457">
<path d="M77.6 100.7 l2 -3 l2 3 z" fill="#000"/>
<path d="M77.6 127.7 l2 -3 l2 3 z" fill="#000"/>
<path d="M77.6 154.7 l2 -3 l2 3 z" fill="#000"/>
<path d="M77.6 181.7 l2 -3 l2 3 z" fill="#000"/>
<path d="M77.6 208.7 l2 -3 l2 3 z" fill="#000"/>
<path d="M77.6 235.7 l2 -3 l2 3 z" fill="#000"/>
<path d="M77.6 262.7 l2 -3 l2 3 z" fill="#000"/>
<path d="M77.6 289.7 l2 -3 l2 3 z" fill="#000"/>
<path d="M68.8 93.2 h7.4 l-3.7 7.4 z" fill="#000"/>
<path d="M77.6 304.7 l2.6 -3.6 l2.6 3.6 z" fill="#000"/>
<path d="M83 325.6 l2.8 3.4 h-5.6 z M83 335.0 l2.8 -3.4 h-5.6 z M82.25 328.6 h1.5 v4 h-1.5 z" fill="#000"/>
<path d="M83 338.6 l2.8 3.4 h-5.6 z M83 348.0 l2.8 -3.4 h-5.6 z M82.25 341.6 h1.5 v4 h-1.5 z" fill="#000"/>
<path d="M83 356.0 l2.8 -3.2 h-5.6 z M83 356.6 l2.8 3.2 h-5.6 z M82.25 351.6 h1.5 v9.4 h-1.5 z" fill="#000"/>
<path d="M68.6 347.8 l1.8 -2.8 l1.8 2.8 z" fill="#000"/>
</svg>
<div style="left:0;top:299px;width:64px;height:1px;background:#fff"></div>
<div style="left:0;top:300px;width:64px;height:1px;background:#d6d3c3"></div>
<div style="left:0;top:301px;width:64px;height:22px;background:#e6fbe3;border-top:1px solid #c9c7b8;border-left:1px solid #c5c3b4;"></div>
<div style="left:1px;top:302px;width:32px;height:21px;background:#defcdb;"></div>
<div style="left:0;top:323px;width:64px;height:1px;background:#fff"></div>
<span style="left:-82.9px;width:200px;text-align:center;transform-origin:50% 0;top:307.44px;font-size:12px;line-height:12px;-webkit-text-stroke:0.25px #000;transform:scaleX(0.87);">1:2</span>
<div style="left:33px;top:303px;width:13px;height:19px;border-radius:2px;border:1px solid #e4ecfc;background:linear-gradient(90deg,#c9d7fc,#b4c6f7 50%,#a4b9f2)"></div>
<svg width="905" height="457" viewBox="0 0 905 457"><path d="M35.8 310.6 l3.7 3.8 l3.7 -3.8" fill="none" stroke="#44568e" stroke-width="2.2"/></svg>
<div style="left:48px;top:303px;width:13.5px;height:8.5px;border-radius:2px;border:1px solid #e4ecfc;background:linear-gradient(#cfdcfc,#aec1f4)"></div>
<div style="left:48px;top:313.5px;width:13.5px;height:8.5px;border-radius:2px;border:1px solid #e4ecfc;background:linear-gradient(#cfdcfc,#aec1f4)"></div>
<svg width="905" height="457" viewBox="0 0 905 457"><path d="M52.6 308.4 l2.2 -2.2 l2.2 2.2 z M52.6 316.8 l2.2 2.2 l2.2 -2.2 z" fill="#4c60a0" stroke="#4c60a0" stroke-width="0.8"/></svg>
<div style="left:0;top:326px;width:64px;height:1px;background:#c9c7b8"></div>
<div style="left:0;top:327px;width:63px;height:23px;background:#defcdb;"></div>
<div style="left:0;top:350px;width:64px;height:1px;background:#fff"></div>
<div style="left:63px;top:327px;width:1px;height:23px;background:#fff"></div>
<span style="left:-68.5px;width:200px;text-align:center;transform-origin:50% 0;top:333.44px;font-size:12px;line-height:12px;-webkit-text-stroke:0.25px #000;transform:scaleX(0.87);">4 ms</span>
<div style="left:145px;top:71px;width:760px;height:386px;background:#000"></div>
<svg width="905" height="457" viewBox="0 0 905 457" shape-rendering="crispEdges">
<line x1="169.5" y1="75" x2="169.5" y2="457" stroke="#8c8c8c" stroke-width="1" stroke-dasharray="1 4"/>
<line x1="194.5" y1="75" x2="194.5" y2="457" stroke="#8c8c8c" stroke-width="1" stroke-dasharray="1 4"/>
<line x1="219.5" y1="75" x2="219.5" y2="457" stroke="#8c8c8c" stroke-width="1" stroke-dasharray="1 4"/>
<line x1="244.5" y1="75" x2="244.5" y2="457" stroke="#8c8c8c" stroke-width="1" stroke-dasharray="1 4"/>
<line x1="269.5" y1="75" x2="269.5" y2="457" stroke="#8c8c8c" stroke-width="1" stroke-dasharray="1 4"/>
<line x1="294.5" y1="75" x2="294.5" y2="457" stroke="#8c8c8c" stroke-width="1" stroke-dasharray="1 4"/>
<line x1="319.5" y1="75" x2="319.5" y2="457" stroke="#8c8c8c" stroke-width="1" stroke-dasharray="1 4"/>
<line x1="344.5" y1="75" x2="344.5" y2="457" stroke="#8c8c8c" stroke-width="1" stroke-dasharray="1 4"/>
<line x1="369.5" y1="75" x2="369.5" y2="457" stroke="#8c8c8c" stroke-width="1" stroke-dasharray="1 4"/>
<line x1="394.5" y1="75" x2="394.5" y2="457" stroke="#8c8c8c" stroke-width="1" stroke-dasharray="1 4"/>
<line x1="419.5" y1="75" x2="419.5" y2="457" stroke="#8c8c8c" stroke-width="1" stroke-dasharray="1 4"/>
<line x1="444.5" y1="75" x2="444.5" y2="457" stroke="#8c8c8c" stroke-width="1" stroke-dasharray="1 4"/>
<line x1="469.5" y1="75" x2="469.5" y2="457" stroke="#8c8c8c" stroke-width="1" stroke-dasharray="1 4"/>
<line x1="494.5" y1="75" x2="494.5" y2="457" stroke="#8c8c8c" stroke-width="1" stroke-dasharray="1 4"/>
<line x1="519.5" y1="75" x2="519.5" y2="457" stroke="#8c8c8c" stroke-width="1" stroke-dasharray="1 4"/>
<line x1="544.5" y1="75" x2="544.5" y2="457" stroke="#8c8c8c" stroke-width="1" stroke-dasharray="1 4"/>
<line x1="569.5" y1="75" x2="569.5" y2="457" stroke="#8c8c8c" stroke-width="1" stroke-dasharray="1 4"/>
<line x1="594.5" y1="75" x2="594.5" y2="457" stroke="#8c8c8c" stroke-width="1" stroke-dasharray="1 4"/>
<line x1="619.5" y1="75" x2="619.5" y2="457" stroke="#8c8c8c" stroke-width="1" stroke-dasharray="1 4"/>
<line x1="644.5" y1="75" x2="644.5" y2="457" stroke="#8c8c8c" stroke-width="1" stroke-dasharray="1 4"/>
<line x1="669.5" y1="75" x2="669.5" y2="457" stroke="#8c8c8c" stroke-width="1" stroke-dasharray="1 4"/>
<line x1="694.5" y1="75" x2="694.5" y2="457" stroke="#8c8c8c" stroke-width="1" stroke-dasharray="1 4"/>
<line x1="719.5" y1="75" x2="719.5" y2="457" stroke="#8c8c8c" stroke-width="1" stroke-dasharray="1 4"/>
<line x1="744.5" y1="75" x2="744.5" y2="457" stroke="#8c8c8c" stroke-width="1" stroke-dasharray="1 4"/>
<line x1="769.5" y1="75" x2="769.5" y2="457" stroke="#8c8c8c" stroke-width="1" stroke-dasharray="1 4"/>
<line x1="794.5" y1="75" x2="794.5" y2="457" stroke="#8c8c8c" stroke-width="1" stroke-dasharray="1 4"/>
<line x1="819.5" y1="75" x2="819.5" y2="457" stroke="#8c8c8c" stroke-width="1" stroke-dasharray="1 4"/>
<line x1="844.5" y1="75" x2="844.5" y2="457" stroke="#8c8c8c" stroke-width="1" stroke-dasharray="1 4"/>
<line x1="869.5" y1="75" x2="869.5" y2="457" stroke="#8c8c8c" stroke-width="1" stroke-dasharray="1 4"/>
<line x1="894.5" y1="75" x2="894.5" y2="457" stroke="#8c8c8c" stroke-width="1" stroke-dasharray="1 4"/>
<rect x="145" y="74" width="1" height="1" fill="#8c8c8c"/>
<rect x="145" y="79" width="1" height="1" fill="#8c8c8c"/>
<rect x="145" y="84" width="1" height="1" fill="#8c8c8c"/>
<rect x="145" y="89" width="1" height="1" fill="#8c8c8c"/>
<rect x="145" y="99" width="1" height="1" fill="#8c8c8c"/>
<rect x="145" y="104" width="1" height="1" fill="#8c8c8c"/>
<rect x="145" y="109" width="1" height="1" fill="#8c8c8c"/>
<rect x="145" y="114" width="1" height="1" fill="#8c8c8c"/>
<rect x="145" y="124" width="1" height="1" fill="#8c8c8c"/>
<rect x="145" y="129" width="1" height="1" fill="#8c8c8c"/>
<rect x="145" y="134" width="1" height="1" fill="#8c8c8c"/>
<rect x="145" y="139" width="1" height="1" fill="#8c8c8c"/>
<rect x="145" y="149" width="1" height="1" fill="#8c8c8c"/>
<rect x="145" y="154" width="1" height="1" fill="#8c8c8c"/>
<rect x="145" y="159" width="1" height="1" fill="#8c8c8c"/>
<rect x="145" y="164" width="1" height="1" fill="#8c8c8c"/>
<rect x="145" y="174" width="1" height="1" fill="#8c8c8c"/>
<rect x="145" y="179" width="1" height="1" fill="#8c8c8c"/>
<rect x="145" y="184" width="1" height="1" fill="#8c8c8c"/>
<rect x="145" y="189" width="1" height="1" fill="#8c8c8c"/>
<rect x="145" y="199" width="1" height="1" fill="#8c8c8c"/>
<rect x="145" y="204" width="1" height="1" fill="#8c8c8c"/>
<rect x="145" y="209" width="1" height="1" fill="#8c8c8c"/>
<rect x="145" y="214" width="1" height="1" fill="#8c8c8c"/>
<rect x="145" y="224" width="1" height="1" fill="#8c8c8c"/>
<rect x="145" y="229" width="1" height="1" fill="#8c8c8c"/>
<rect x="145" y="234" width="1" height="1" fill="#8c8c8c"/>
<rect x="145" y="239" width="1" height="1" fill="#8c8c8c"/>
<rect x="145" y="249" width="1" height="1" fill="#8c8c8c"/>
<rect x="145" y="254" width="1" height="1" fill="#8c8c8c"/>
<rect x="145" y="259" width="1" height="1" fill="#8c8c8c"/>
<rect x="145" y="264" width="1" height="1" fill="#8c8c8c"/>
<rect x="145" y="274" width="1" height="1" fill="#8c8c8c"/>
<rect x="145" y="279" width="1" height="1" fill="#8c8c8c"/>
<rect x="145" y="284" width="1" height="1" fill="#8c8c8c"/>
<rect x="145" y="289" width="1" height="1" fill="#8c8c8c"/>
<rect x="145" y="299" width="1" height="1" fill="#8c8c8c"/>
<rect x="145" y="304" width="1" height="1" fill="#8c8c8c"/>
<rect x="145" y="309" width="1" height="1" fill="#8c8c8c"/>
<rect x="145" y="314" width="1" height="1" fill="#8c8c8c"/>
<rect x="145" y="324" width="1" height="1" fill="#8c8c8c"/>
<rect x="145" y="329" width="1" height="1" fill="#8c8c8c"/>
<rect x="145" y="334" width="1" height="1" fill="#8c8c8c"/>
<rect x="145" y="339" width="1" height="1" fill="#8c8c8c"/>
<rect x="145" y="349" width="1" height="1" fill="#8c8c8c"/>
<rect x="145" y="354" width="1" height="1" fill="#8c8c8c"/>
<rect x="145" y="359" width="1" height="1" fill="#8c8c8c"/>
<rect x="145" y="364" width="1" height="1" fill="#8c8c8c"/>
<rect x="145" y="374" width="1" height="1" fill="#8c8c8c"/>
<rect x="145" y="379" width="1" height="1" fill="#8c8c8c"/>
<rect x="145" y="384" width="1" height="1" fill="#8c8c8c"/>
<rect x="145" y="389" width="1" height="1" fill="#8c8c8c"/>
<rect x="145" y="399" width="1" height="1" fill="#8c8c8c"/>
<rect x="145" y="404" width="1" height="1" fill="#8c8c8c"/>
<rect x="145" y="409" width="1" height="1" fill="#8c8c8c"/>
<rect x="145" y="414" width="1" height="1" fill="#8c8c8c"/>
<rect x="145" y="424" width="1" height="1" fill="#8c8c8c"/>
<rect x="145" y="429" width="1" height="1" fill="#8c8c8c"/>
<rect x="145" y="434" width="1" height="1" fill="#8c8c8c"/>
<rect x="145" y="439" width="1" height="1" fill="#8c8c8c"/>
<rect x="145" y="449" width="1" height="1" fill="#8c8c8c"/>
<rect x="145" y="454" width="1" height="1" fill="#8c8c8c"/>
<line x1="169" y1="95.5" x2="905" y2="95.5" stroke="#8c8c8c" stroke-width="1" stroke-dasharray="1 4"/>
<line x1="169" y1="120.5" x2="905" y2="120.5" stroke="#8c8c8c" stroke-width="1" stroke-dasharray="1 4"/>
<line x1="169" y1="145.5" x2="905" y2="145.5" stroke="#8c8c8c" stroke-width="1" stroke-dasharray="1 4"/>
<line x1="169" y1="170.5" x2="905" y2="170.5" stroke="#8c8c8c" stroke-width="1" stroke-dasharray="1 4"/>
<line x1="169" y1="195.5" x2="905" y2="195.5" stroke="#8c8c8c" stroke-width="1" stroke-dasharray="1 4"/>
<line x1="169" y1="220.5" x2="905" y2="220.5" stroke="#8c8c8c" stroke-width="1" stroke-dasharray="1 4"/>
<line x1="169" y1="245.5" x2="905" y2="245.5" stroke="#8c8c8c" stroke-width="1" stroke-dasharray="1 4"/>
<line x1="169" y1="270.5" x2="905" y2="270.5" stroke="#8c8c8c" stroke-width="1" stroke-dasharray="1 4"/>
<line x1="169" y1="295.5" x2="905" y2="295.5" stroke="#8c8c8c" stroke-width="1" stroke-dasharray="1 4"/>
<line x1="169" y1="320.5" x2="905" y2="320.5" stroke="#8c8c8c" stroke-width="1" stroke-dasharray="1 4"/>
<line x1="169" y1="345.5" x2="905" y2="345.5" stroke="#8c8c8c" stroke-width="1" stroke-dasharray="1 4"/>
<line x1="169" y1="370.5" x2="905" y2="370.5" stroke="#8c8c8c" stroke-width="1" stroke-dasharray="1 4"/>
<line x1="169" y1="395.5" x2="905" y2="395.5" stroke="#8c8c8c" stroke-width="1" stroke-dasharray="1 4"/>
<line x1="169" y1="420.5" x2="905" y2="420.5" stroke="#8c8c8c" stroke-width="1" stroke-dasharray="1 4"/>
<line x1="169" y1="445.5" x2="905" y2="445.5" stroke="#8c8c8c" stroke-width="1" stroke-dasharray="1 4"/>
<line x1="244.5" y1="71" x2="244.5" y2="457" stroke="#d4d4d4" stroke-width="1" stroke-dasharray="4 1" stroke-dashoffset="-0"/>
<line x1="412.5" y1="71" x2="412.5" y2="457" stroke="#cccccc" stroke-width="1"/>
<rect x="169" y="169" width="736" height="1" fill="#fab26e"/>
<polyline fill="none" stroke="#ffffff" stroke-width="1" points="169.5,221.5 169.5,224.5 174.5,224.5 174.5,220.5 175.5,220.5 175.5,224.5 176.5,224.5 176.5,220.5 179.5,220.5 179.5,224.5 180.5,224.5 180.5,220.5 182.5,220.5 182.5,224.5 185.5,224.5 185.5,220.5 186.5,220.5 186.5,224.5 187.5,224.5 187.5,220.5 188.5,220.5 188.5,224.5 189.5,224.5 189.5,220.5 191.5,220.5 191.5,224.5 192.5,224.5 192.5,220.5 194.5,220.5 194.5,224.5 199.5,224.5 199.5,220.5 201.5,220.5 201.5,224.5 203.5,224.5 203.5,220.5 204.5,220.5 204.5,224.5 206.5,224.5 206.5,220.5 207.5,220.5 207.5,224.5 208.5,224.5 208.5,220.5 210.5,220.5 210.5,224.5 211.5,224.5 211.5,220.5 212.5,220.5 212.5,224.5 213.5,224.5 213.5,220.5 215.5,220.5 215.5,224.5 217.5,224.5 217.5,220.5 219.5,220.5 219.5,221.5 219.5,217.5 221.5,217.5 221.5,214.5 224.5,214.5 224.5,210.5 226.5,210.5 226.5,206.5 228.5,206.5 228.5,202.5 230.5,202.5 230.5,199.5 233.5,199.5 233.5,195.5 235.5,195.5 235.5,191.5 237.5,191.5 237.5,188.5 240.5,188.5 240.5,184.5 242.5,184.5 243.5,184.5 243.5,188.5 244.5,188.5 244.5,184.5 248.5,184.5 248.5,195.5 249.5,195.5 249.5,221.5 250.5,220.5 252.5,220.5 252.5,224.5 254.5,224.5 254.5,220.5 255.5,220.5 255.5,224.5 256.5,224.5 256.5,220.5 257.5,220.5 257.5,224.5 258.5,224.5 258.5,220.5 259.5,220.5 259.5,224.5 261.5,224.5 261.5,220.5 262.5,220.5 262.5,224.5 263.5,224.5 263.5,220.5 265.5,220.5 265.5,224.5 266.5,224.5 266.5,220.5 267.5,220.5 267.5,224.5 269.5,224.5 269.5,220.5 271.5,220.5 271.5,224.5 272.5,224.5 272.5,220.5 274.5,220.5 274.5,224.5 275.5,224.5 275.5,220.5 278.5,220.5 278.5,224.5 280.5,224.5 280.5,220.5 281.5,220.5 281.5,224.5 286.5,224.5 286.5,220.5 287.5,220.5 287.5,224.5 288.5,224.5 288.5,220.5 290.5,220.5 290.5,224.5 291.5,224.5 291.5,220.5 292.5,220.5 292.5,224.5 293.5,224.5 293.5,220.5 295.5,220.5 295.5,224.5 297.5,224.5 297.5,220.5 299.5,220.5 299.5,224.5 302.5,224.5 302.5,220.5 303.5,220.5 303.5,224.5 305.5,224.5 305.5,220.5 307.5,220.5 307.5,224.5 309.5,224.5 309.5,220.5 310.5,220.5 310.5,224.5 313.5,224.5 313.5,220.5 318.5,220.5 318.5,224.5 319.5,224.5 319.5,220.5 321.5,220.5 321.5,224.5 322.5,224.5 322.5,220.5 324.5,220.5 324.5,224.5 325.5,224.5 325.5,221.5 326.5,221.5 326.5,228.5 326.5,221.5 327.5,224.5 328.5,224.5 328.5,220.5 329.5,220.5 329.5,224.5 331.5,224.5 331.5,220.5 332.5,220.5 332.5,224.5 333.5,224.5 333.5,220.5 334.5,220.5 334.5,224.5 335.5,224.5 335.5,220.5 336.5,220.5 336.5,224.5 338.5,224.5 338.5,220.5 339.5,220.5 339.5,224.5 340.5,224.5 340.5,220.5 341.5,220.5 341.5,224.5 344.5,224.5 344.5,220.5 345.5,220.5 345.5,224.5 346.5,224.5 346.5,220.5 347.5,220.5 347.5,224.5 350.5,224.5 350.5,220.5 353.5,220.5 353.5,224.5 356.5,224.5 356.5,220.5 357.5,220.5 357.5,224.5 358.5,224.5 358.5,220.5 359.5,220.5 359.5,224.5 362.5,224.5 362.5,220.5 367.5,220.5 367.5,224.5 368.5,224.5 368.5,220.5 369.5,220.5 369.5,224.5 370.5,224.5 370.5,220.5 371.5,220.5 371.5,224.5 372.5,224.5 372.5,220.5 374.5,220.5 374.5,224.5 375.5,224.5 375.5,220.5 376.5,220.5 376.5,224.5 377.5,224.5 377.5,220.5 378.5,220.5 378.5,224.5 380.5,224.5 380.5,220.5 385.5,220.5 385.5,224.5 387.5,224.5 387.5,220.5 388.5,220.5 388.5,224.5 390.5,224.5 390.5,220.5 391.5,220.5 391.5,221.5 391.5,217.5 392.5,217.5 392.5,214.5 393.5,214.5 393.5,210.5 394.5,210.5 394.5,207.5 395.5,207.5 395.5,203.5 396.5,203.5 396.5,200.5 397.5,200.5 397.5,196.5 398.5,196.5 398.5,192.5 399.5,192.5 399.5,189.5 400.5,189.5 400.5,185.5 401.5,185.5 401.5,182.5 402.5,182.5 402.5,178.5 403.5,178.5 403.5,175.5 404.5,175.5 404.5,171.5 405.5,171.5 420.5,171.5 420.5,196.5 421.5,196.5 421.5,221.5 422.5,220.5 423.5,220.5 423.5,224.5 426.5,224.5 426.5,220.5 431.5,220.5 431.5,224.5 433.5,224.5 433.5,220.5 435.5,220.5 435.5,224.5 436.5,224.5 436.5,220.5 437.5,220.5 437.5,224.5 438.5,224.5 438.5,220.5 439.5,220.5 439.5,224.5 440.5,224.5 440.5,220.5 445.5,220.5 445.5,224.5 446.5,224.5 446.5,220.5 447.5,220.5 447.5,224.5 449.5,224.5 449.5,220.5 450.5,220.5 450.5,224.5 452.5,224.5 452.5,220.5 453.5,220.5 453.5,224.5 458.5,224.5 458.5,220.5 460.5,220.5 460.5,224.5 461.5,224.5 461.5,220.5 462.5,220.5 462.5,224.5 463.5,224.5 463.5,220.5 465.5,220.5 465.5,224.5 470.5,224.5 470.5,220.5 472.5,220.5 472.5,224.5 473.5,224.5 473.5,220.5 474.5,220.5 474.5,224.5 475.5,224.5 475.5,220.5 480.5,220.5 480.5,224.5 481.5,224.5 481.5,220.5 482.5,220.5 482.5,224.5 483.5,224.5 483.5,220.5 485.5,220.5 485.5,224.5 487.5,224.5 487.5,220.5 488.5,220.5 488.5,224.5 490.5,224.5 490.5,220.5 491.5,220.5 491.5,224.5 492.5,224.5 492.5,220.5 497.5,220.5 497.5,224.5 498.5,224.5 498.5,220.5 500.5,220.5 500.5,224.5 503.5,224.5 503.5,220.5 505.5,220.5 505.5,224.5 506.5,224.5 506.5,220.5 508.5,220.5 508.5,224.5 509.5,224.5 509.5,220.5 512.5,220.5 512.5,224.5 513.5,224.5 513.5,220.5 516.5,220.5 516.5,224.5 517.5,224.5 517.5,220.5 518.5,220.5 518.5,224.5 519.5,224.5 519.5,220.5 520.5,220.5 520.5,224.5 522.5,224.5 522.5,220.5 524.5,220.5 524.5,224.5 526.5,224.5 526.5,220.5 528.5,220.5 528.5,224.5 529.5,224.5 529.5,220.5 530.5,220.5 530.5,224.5 531.5,224.5 531.5,220.5 534.5,220.5 534.5,224.5 535.5,224.5 535.5,220.5 536.5,220.5 536.5,224.5 538.5,224.5 538.5,220.5 543.5,220.5 543.5,224.5 545.5,224.5 545.5,220.5 546.5,220.5 546.5,224.5 547.5,224.5 547.5,220.5 549.5,220.5 549.5,224.5 550.5,224.5 550.5,220.5 553.5,220.5 553.5,224.5 555.5,224.5 555.5,220.5 556.5,220.5 556.5,224.5 561.5,224.5 561.5,220.5 562.5,220.5 562.5,224.5 563.5,224.5 563.5,221.5 563.5,217.5 564.5,217.5 564.5,213.5 565.5,213.5 565.5,209.5 566.5,209.5 566.5,205.5 567.5,205.5 567.5,201.5 568.5,201.5 568.5,197.5 570.5,197.5 570.5,193.5 571.5,193.5 571.5,189.5 572.5,189.5 572.5,185.5 573.5,185.5 573.5,181.5 574.5,181.5 574.5,177.5 575.5,177.5 578.5,177.5 578.5,173.5 579.5,177.5 580.5,173.5 581.5,177.5 588.5,177.5 588.5,173.5 589.5,177.5 591.5,177.5 591.5,185.5 592.5,185.5 592.5,221.5 593.5,224.5 594.5,224.5 594.5,220.5 595.5,220.5 595.5,224.5 597.5,224.5 597.5,220.5 600.5,220.5 600.5,224.5 603.5,224.5 603.5,220.5 604.5,220.5 604.5,224.5 606.5,224.5 606.5,220.5 608.5,220.5 608.5,224.5 609.5,224.5 609.5,220.5 611.5,220.5 611.5,224.5 614.5,224.5 614.5,220.5 616.5,220.5 616.5,224.5 618.5,224.5 618.5,220.5 619.5,220.5 619.5,224.5 620.5,224.5 620.5,220.5 622.5,220.5 622.5,224.5 623.5,224.5 623.5,220.5 625.5,220.5 625.5,221.5 625.5,221.5 625.5,217.5 625.5,221.5 626.5,224.5 627.5,224.5 627.5,220.5 629.5,220.5 629.5,224.5 630.5,224.5 630.5,220.5 631.5,220.5 631.5,224.5 636.5,224.5 636.5,220.5 637.5,220.5 637.5,224.5 639.5,224.5 639.5,220.5 640.5,220.5 640.5,224.5 642.5,224.5 642.5,220.5 644.5,220.5 644.5,224.5 646.5,224.5 646.5,220.5 647.5,220.5 647.5,224.5 652.5,224.5 652.5,220.5 653.5,220.5 653.5,224.5 654.5,224.5 654.5,220.5 655.5,220.5 655.5,224.5 657.5,224.5 657.5,220.5 659.5,220.5 659.5,224.5 660.5,224.5 660.5,220.5 662.5,220.5 662.5,224.5 663.5,224.5 663.5,220.5 668.5,220.5 668.5,224.5 669.5,224.5 669.5,220.5 672.5,220.5 672.5,224.5 673.5,224.5 673.5,220.5 674.5,220.5 674.5,224.5 675.5,224.5 675.5,220.5 677.5,220.5 677.5,224.5 678.5,224.5 678.5,220.5 679.5,220.5 679.5,224.5 682.5,224.5 682.5,220.5 683.5,220.5 683.5,224.5 685.5,224.5 685.5,220.5 688.5,220.5 688.5,224.5 690.5,224.5 690.5,220.5 693.5,220.5 693.5,224.5 694.5,224.5 694.5,220.5 697.5,220.5 697.5,224.5 700.5,224.5 700.5,220.5 701.5,220.5 701.5,224.5 702.5,224.5 702.5,220.5 703.5,220.5 703.5,224.5 706.5,224.5 706.5,220.5 708.5,220.5 708.5,224.5 710.5,224.5 710.5,220.5 712.5,220.5 712.5,224.5 713.5,224.5 713.5,220.5 714.5,220.5 714.5,224.5 716.5,224.5 716.5,220.5 717.5,220.5 717.5,224.5 718.5,224.5 718.5,220.5 720.5,220.5 720.5,224.5 721.5,224.5 721.5,220.5 722.5,220.5 722.5,224.5 724.5,224.5 724.5,220.5 727.5,220.5 727.5,224.5 728.5,224.5 728.5,220.5 729.5,220.5 729.5,224.5 730.5,224.5 730.5,220.5 731.5,220.5 731.5,224.5 732.5,224.5 732.5,220.5 733.5,220.5 733.5,224.5 736.5,224.5 736.5,221.5 736.5,217.5 737.5,217.5 737.5,214.5 738.5,214.5 738.5,210.5 739.5,210.5 739.5,207.5 740.5,207.5 740.5,203.5 741.5,203.5 741.5,200.5 742.5,200.5 742.5,196.5 743.5,196.5 743.5,192.5 744.5,192.5 744.5,189.5 745.5,189.5 745.5,185.5 746.5,185.5 746.5,182.5 747.5,182.5 747.5,178.5 748.5,178.5 748.5,175.5 749.5,175.5 749.5,171.5 750.5,171.5 752.5,171.5 752.5,166.5 754.5,166.5 754.5,171.5 756.5,171.5 756.5,166.5 757.5,171.5 759.5,171.5 759.5,166.5 760.5,171.5 762.5,171.5 762.5,166.5 763.5,166.5 763.5,171.5 764.5,171.5 764.5,188.5 765.5,188.5 765.5,215.5 766.5,215.5 766.5,221.5 767.5,220.5 768.5,220.5 768.5,224.5 770.5,224.5 770.5,220.5 771.5,220.5 771.5,224.5 772.5,224.5 772.5,220.5 774.5,220.5 774.5,224.5 775.5,224.5 775.5,220.5 776.5,220.5 776.5,224.5 777.5,224.5 777.5,220.5 782.5,220.5 782.5,224.5 784.5,224.5 784.5,220.5 787.5,220.5 787.5,224.5 792.5,224.5 792.5,220.5 793.5,220.5 793.5,224.5 795.5,224.5 795.5,220.5 800.5,220.5 800.5,224.5 803.5,224.5 803.5,220.5 804.5,220.5 804.5,224.5 805.5,224.5 805.5,220.5 806.5,220.5 806.5,224.5 807.5,224.5 807.5,220.5 808.5,220.5 808.5,224.5 809.5,224.5 809.5,220.5 811.5,220.5 811.5,224.5 813.5,224.5 813.5,220.5 816.5,220.5 816.5,224.5 817.5,224.5 817.5,220.5 819.5,220.5 819.5,224.5 821.5,224.5 821.5,220.5 822.5,220.5 822.5,224.5 825.5,224.5 825.5,220.5 830.5,220.5 830.5,224.5 831.5,224.5 831.5,220.5 836.5,220.5 836.5,224.5 837.5,224.5 837.5,220.5 838.5,220.5 838.5,224.5 843.5,224.5 843.5,220.5 846.5,220.5 846.5,224.5 847.5,224.5 847.5,220.5 848.5,220.5 848.5,224.5 849.5,224.5 849.5,220.5 850.5,220.5 850.5,224.5 851.5,224.5 851.5,220.5 852.5,220.5 852.5,224.5 854.5,224.5 854.5,220.5 855.5,220.5 855.5,224.5 856.5,224.5 856.5,221.5 856.5,221.5 856.5,217.5 856.5,221.5 857.5,224.5 859.5,224.5 859.5,220.5 860.5,220.5 860.5,224.5 861.5,224.5 861.5,220.5 862.5,220.5 862.5,224.5 867.5,224.5 867.5,220.5 868.5,220.5 868.5,224.5 871.5,224.5 871.5,220.5 872.5,220.5 872.5,224.5 875.5,224.5 875.5,220.5 876.5,220.5 876.5,224.5 877.5,224.5 877.5,220.5 880.5,220.5 880.5,224.5 881.5,224.5 881.5,220.5 883.5,220.5 883.5,224.5 886.5,224.5 886.5,220.5 889.5,220.5 889.5,224.5 891.5,224.5 891.5,220.5 896.5,220.5 896.5,224.5 897.5,224.5 897.5,220.5 898.5,220.5 898.5,224.5 899.5,224.5 899.5,220.5 900.5,220.5 900.5,224.5 901.5,224.5 901.5,220.5 902.5,220.5 902.5,224.5 904.5,224.5 904.5,220.5 905.5,220.5 905.5,221.5"/>
</svg>
<span style="left:147.6px;top:163.2px;font-size:14.5px;line-height:15px;color:#fab26e;-webkit-text-stroke:0.3px #fab26e;transform:scaleX(0.78);transform-origin:0 0">2</span>
<svg width="905" height="457" viewBox="0 0 905 457" shape-rendering="crispEdges"><rect x="155" y="170" width="11" height="1" fill="#fab26e"/><path d="M158 167 v7 h1.5 l5 -3.5 l-5 -3.5 z" fill="#fab26e" shape-rendering="auto"/></svg>
<div style="left:216px;top:310px;width:229px;height:93px;background:#0b3fd6;border-radius:3px 3px 0 0;"></div>
<div style="left:216px;top:310px;width:229px;height:21px;border-radius:3px 3px 0 0;background:linear-gradient(#0a38c8 0px,#3582f4 2px,#2a78f0 4px,#0e5fea 7px,#0a58e6 14px,#0c5eec 19px,#0a4cdc 21px);"></div>
<div style="left:216px;top:331px;width:3px;height:72px;background:linear-gradient(90deg,#0a30c8,#1657e6 60%,#0b44d8)"></div>
<div style="left:442px;top:331px;width:3px;height:72px;background:linear-gradient(90deg,#0b44d8,#1657e6 40%,#0a30c8)"></div>
<div style="left:216px;top:400px;width:229px;height:3px;background:linear-gradient(#0b44d8,#0f4cdc 40%,#0628b8)"></div>
<span style="left:220.5px;top:314.5px;font-size:11.5px;line-height:14px;font-weight:bold;color:#fff;letter-spacing:0.38px">CTi, Range -4A...+10A (500mV/A)</span>
<div style="left:411px;top:314px;width:15px;height:15px;border:1px solid #f4f6fc;border-radius:2px;background:linear-gradient(135deg,#d6def6,#b9c6ec)"></div>
<div style="left:427px;top:314px;width:14px;height:15px;border:1px solid #f4ece8;border-radius:3px;background:linear-gradient(135deg,#e87a5a,#cc3a1a 60%,#b83010)"></div>
<svg width="905" height="457" viewBox="0 0 905 457"><path d="M414.6 319.5 l3.9 4 l3.9 -4" fill="none" stroke="#46568c" stroke-width="2.2"/><path d="M430.8 318.3 l6.4 6.4 M437.2 318.3 l-6.4 6.4" stroke="#fff" stroke-width="2.1"/></svg>
<div style="left:219px;top:331px;width:223px;height:69px;background:#ECE9D8"></div>
<div style="left:269px;top:331px;width:173px;height:67px;background:#fff"></div>
<div style="left:269px;top:331px;width:171px;height:32px;background:#defcdb;border-left:1px solid #a9a898;border-top:1px solid #c9c8b8"></div>
<div style="left:269px;top:364px;width:171px;height:32px;background:#defcdb;border-left:1px solid #a9a898;border-top:1px solid #a9a898"></div>
<div style="left:222px;top:334px;width:22px;height:25px;background:#defcdb;border-left:1px solid #b5b3a4;border-top:1px solid #b5b3a4;border-right:1px solid #fff;border-bottom:1px solid #fff"></div>
<svg width="905" height="457" viewBox="0 0 905 457"><path d="M232.6 337.4 h2.2 v17.3 h-2.3 v-13.2 q-1.8 1.5 -4.3 2.3 v-2.1 q3.2 -1.5 4.4 -4.3 z" fill="#000"/></svg>
<span style="left:247px;top:340px;font-size:14px;line-height:16px;font-weight:bold;letter-spacing:1.4px;color:#000;-webkit-text-stroke:0.5px #000">A:</span>
<span style="left:229.8px;top:370.5px;font-size:14px;line-height:16px;font-weight:bold;letter-spacing:1.4px;color:#000;-webkit-text-stroke:0.5px #000">A-B:</span>
<span style="left:316px;top:334.8px;font-size:23px;line-height:26px;color:#000">0.227 A</span>
<span style="left:316px;top:368.3px;font-size:23px;line-height:26px;color:#000">0.073 A</span>

</body></html>
